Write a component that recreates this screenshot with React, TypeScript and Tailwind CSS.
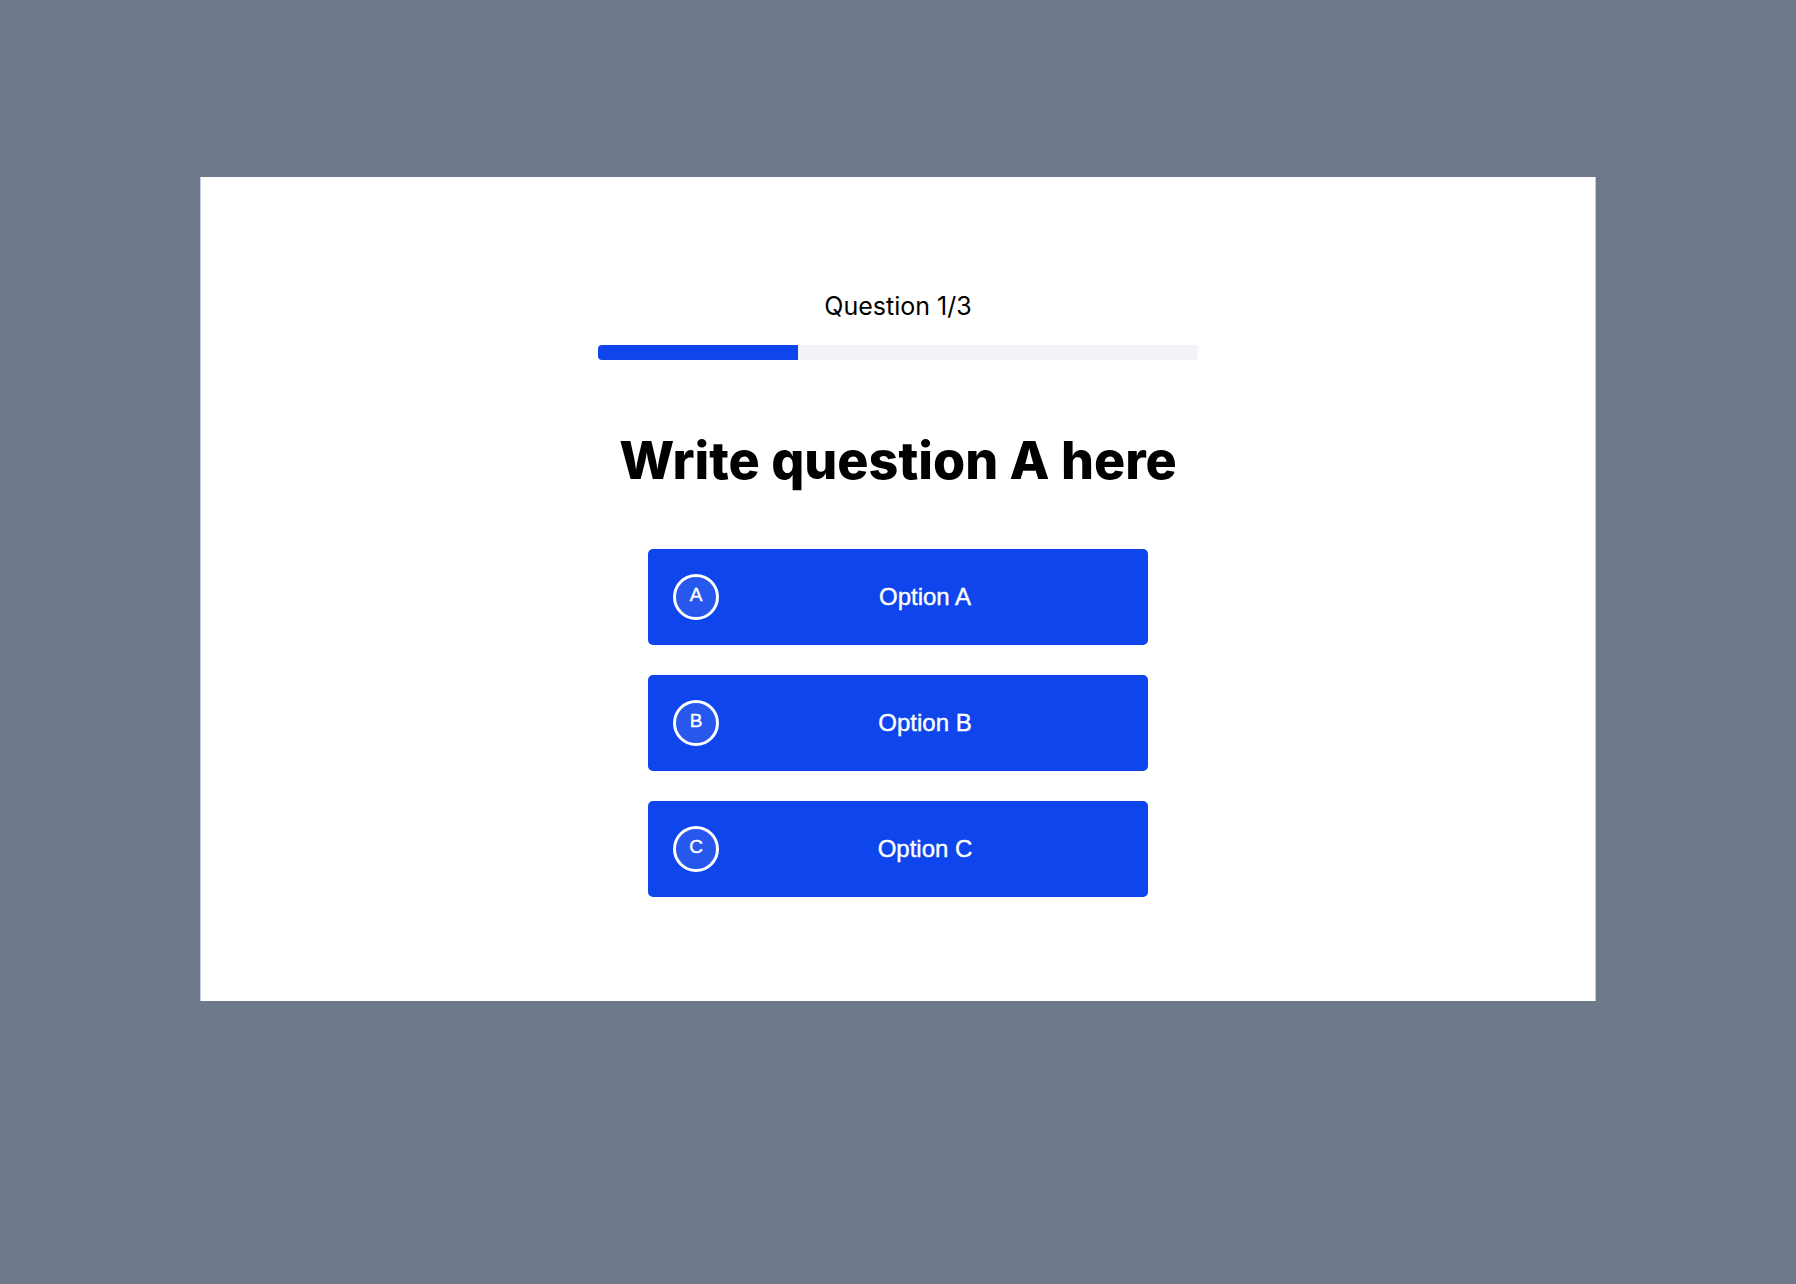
import React, { useState } from 'react';

const OPTIONS = [
  { key: 'A', label: 'Option A' },
  { key: 'B', label: 'Option B' },
  { key: 'C', label: 'Option C' },
];

const TOTAL = 3;

export default function App() {
  const [current] = useState(1);
  const [picked, setPicked] = useState<string | null>(null);

  return (
    <div className="min-h-screen w-full bg-[#6e7a8c] pt-[177px]">
      <div className="mx-auto flex w-[1396px] flex-col items-center border-x border-[#c9cce0] bg-white pt-[113px] pb-[104px]">
        <p className="text-[25px] leading-[32px] text-black" style={{ fontFamily: 'Inter, "Noto Sans", sans-serif' }}>
          Question {current}/{TOTAL}
        </p>

        {/* progress track */}
        <div className="mt-[23px] h-[15px] w-[600px] overflow-hidden rounded-[4px] bg-[#f3f2f6]">
          <div className="h-full bg-[#0e45ec]" style={{ width: `${(current / TOTAL) * 100}%` }} />
        </div>

        <h1
          className="mt-[75px] text-[52px] leading-none font-extrabold text-black"
          style={{ fontFamily: 'Inter, "Noto Sans", sans-serif' }}
        >
          Write question A here
        </h1>

        <div className="mt-[62px] flex flex-col gap-[30px]">
          {OPTIONS.map((opt) => (
            <button
              key={opt.key}
              type="button"
              onClick={() => setPicked(opt.key)}
              className={`flex h-[96px] w-[500px] items-center rounded-[5px] bg-[#0e45ec] pl-[25px] text-white [-webkit-text-stroke:0.4px_white] ${
                picked === opt.key ? 'ring-2 ring-[#0e45ec]/40' : ''
              }`}
              style={{ fontFamily: '"Liberation Sans", Arial, sans-serif' }}
            >
              <span className="flex h-[46px] w-[46px] shrink-0 items-center justify-center rounded-full border-[3px] border-white bg-white/10 pb-[4px] text-[19px]">
                {opt.key}
              </span>
              <span className="flex-1 pr-[17px] text-center text-[24px]">{opt.label}</span>
            </button>
          ))}
        </div>
      </div>
    </div>
  );
}
